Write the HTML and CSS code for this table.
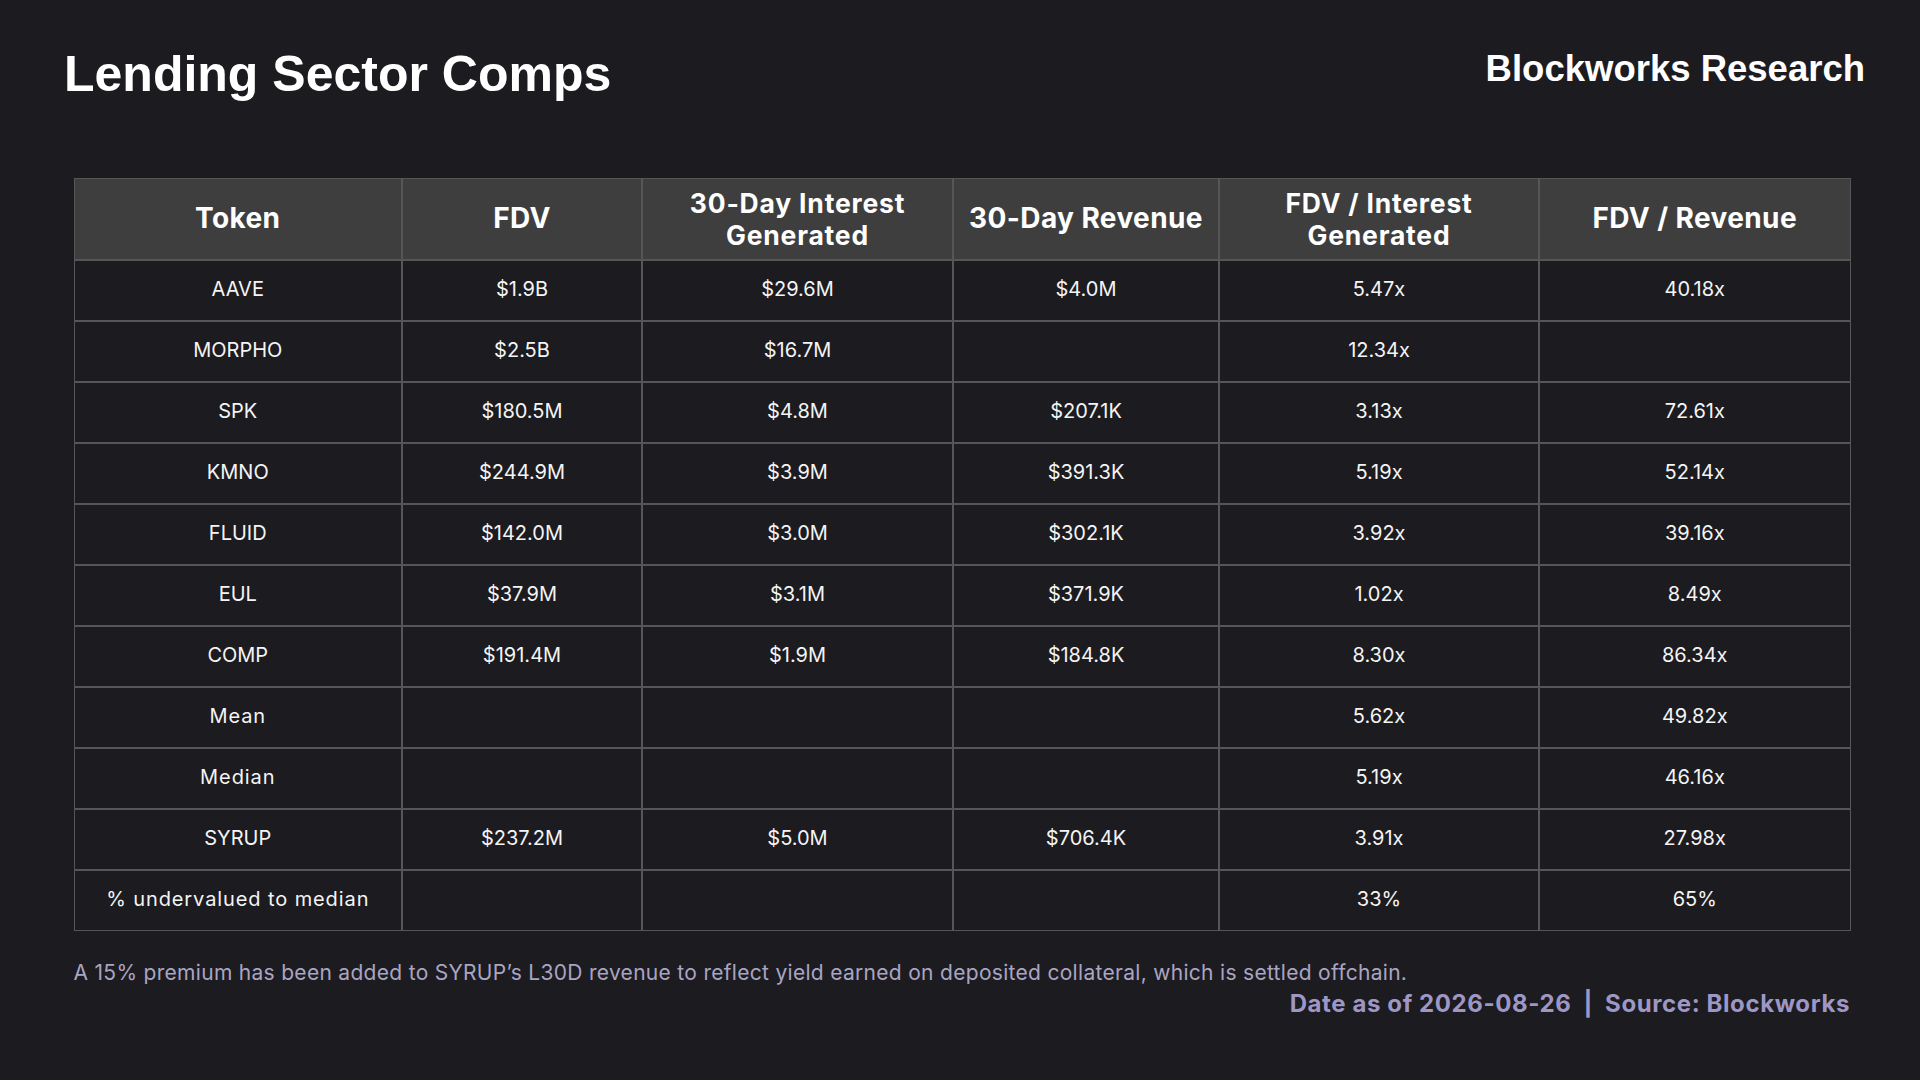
FILE: index.html
```html
<!DOCTYPE html>
<html lang="en">
<head>
<meta charset="utf-8">
<title>Lending Sector Comps</title>
<link rel="stylesheet" href="styles.css">
</head>
<body>
<div class="page">
  <header class="top">
    <h1 class="title">Lending Sector Comps</h1>
    <div class="brand">Blockworks Research</div>
  </header>
  <table class="comps">
    <colgroup>
      <col class="c1"><col class="c2"><col class="c3"><col class="c4"><col class="c5"><col class="c6">
    </colgroup>
    <thead>
      <tr>
        <th>Token</th>
        <th>FDV</th>
        <th class="two">30-Day Interest<br>Generated</th>
        <th>30-Day Revenue</th>
        <th class="two">FDV / Interest<br>Generated</th>
        <th>FDV / Revenue</th>
      </tr>
    </thead>
    <tbody>
      <tr><td class="name">AAVE</td><td>$1.9B</td><td>$29.6M</td><td>$4.0M</td><td>5.47x</td><td>40.18x</td></tr>
      <tr><td class="name">MORPHO</td><td>$2.5B</td><td>$16.7M</td><td></td><td>12.34x</td><td></td></tr>
      <tr><td class="name">SPK</td><td>$180.5M</td><td>$4.8M</td><td>$207.1K</td><td>3.13x</td><td>72.61x</td></tr>
      <tr><td class="name">KMNO</td><td>$244.9M</td><td>$3.9M</td><td>$391.3K</td><td>5.19x</td><td>52.14x</td></tr>
      <tr><td class="name">FLUID</td><td>$142.0M</td><td>$3.0M</td><td>$302.1K</td><td>3.92x</td><td>39.16x</td></tr>
      <tr><td class="name">EUL</td><td>$37.9M</td><td>$3.1M</td><td>$371.9K</td><td>1.02x</td><td>8.49x</td></tr>
      <tr><td class="name">COMP</td><td>$191.4M</td><td>$1.9M</td><td>$184.8K</td><td>8.30x</td><td>86.34x</td></tr>
      <tr><td class="name lower">Mean</td><td></td><td></td><td></td><td>5.62x</td><td>49.82x</td></tr>
      <tr><td class="name lower">Median</td><td></td><td></td><td></td><td>5.19x</td><td>46.16x</td></tr>
      <tr><td class="name">SYRUP</td><td>$237.2M</td><td>$5.0M</td><td>$706.4K</td><td>3.91x</td><td>27.98x</td></tr>
      <tr><td class="name lower">% undervalued to median</td><td></td><td></td><td></td><td>33%</td><td>65%</td></tr>
    </tbody>
  </table>
  <p class="note">A 15% premium has been added to SYRUP’s L30D revenue to reflect yield earned on deposited collateral, which is settled offchain.</p>
  <p class="source">Date as of 2026-08-26<span class="sep">|</span>Source: Blockworks</p>
</div>
</body>
</html>
```

FILE: styles.css
```css
* { box-sizing: border-box; }
html, body {
  margin: 0;
  padding: 0;
  background: #1c1b20;
}
body {
  width: 1920px;
  height: 1080px;
  overflow: hidden;
  font-family: "Inter", "Open Sans", sans-serif;
  color: #f2f2f2;
}
.page {
  padding: 50px 55px 0 64px;
}
.top {
  display: flex;
  justify-content: space-between;
  align-items: flex-start;
}
.title {
  margin: 0;
  font-family: "Liberation Sans", Arial, sans-serif;
  font-weight: 700;
  font-size: 50px;
  line-height: 49px;
  color: #ffffff;
}
.brand {
  font-family: "Liberation Sans", Arial, sans-serif;
  font-weight: 700;
  font-size: 36.5px;
  line-height: 37px;
  color: #ffffff;
}
.comps {
  margin: 79px 0 0 9.5px;
  width: 1777px;
  border-collapse: collapse;
  table-layout: fixed;
}
.c1 { width: 328px; }
.c2 { width: 240px; }
.c3 { width: 311px; }
.c4 { width: 266px; }
.c5 { width: 320px; }
.c6 { width: 311px; }
.comps th,
.comps td {
  border: 2px solid #565656;
  text-align: center;
  padding: 0;
}
.comps th {
  background: #3e3e3e;
  height: 81px;
  padding-bottom: 2px;
  font-weight: 700;
  font-size: 28px;
  line-height: 30px;
  color: #ffffff;
  letter-spacing: 0.4px;
}
.comps th.two {
  font-size: 26.5px;
  line-height: 32px;
  letter-spacing: 0.8px;
  padding-bottom: 0;
}
.comps thead tr th { border-top-width: 1px; }
.comps td {
  height: 61px;
  padding-bottom: 2px;
  font-size: 20px;
  font-weight: 400;
  color: #f4f4f4;
}
.comps td.lower { letter-spacing: 0.9px; }
.comps tr > :first-child { border-left-width: 1px; }
.comps tr > :last-child { border-right-width: 1px; }
.comps tbody tr:last-child td { border-bottom-width: 1px; }
.note {
  margin: 30px 0 0 9.5px;
  font-size: 21px;
  line-height: 24px;
  letter-spacing: 0.3px;
  color: #aaa5c2;
}
.source {
  margin: 5px 0 0 0;
  width: 1786px;
  text-align: right;
  font-size: 24px;
  line-height: 28px;
  font-weight: 700;
  letter-spacing: 0.6px;
  color: #9e97c6;
}
.sep {
  display: inline-block;
  margin: 0 12px;
}
```
